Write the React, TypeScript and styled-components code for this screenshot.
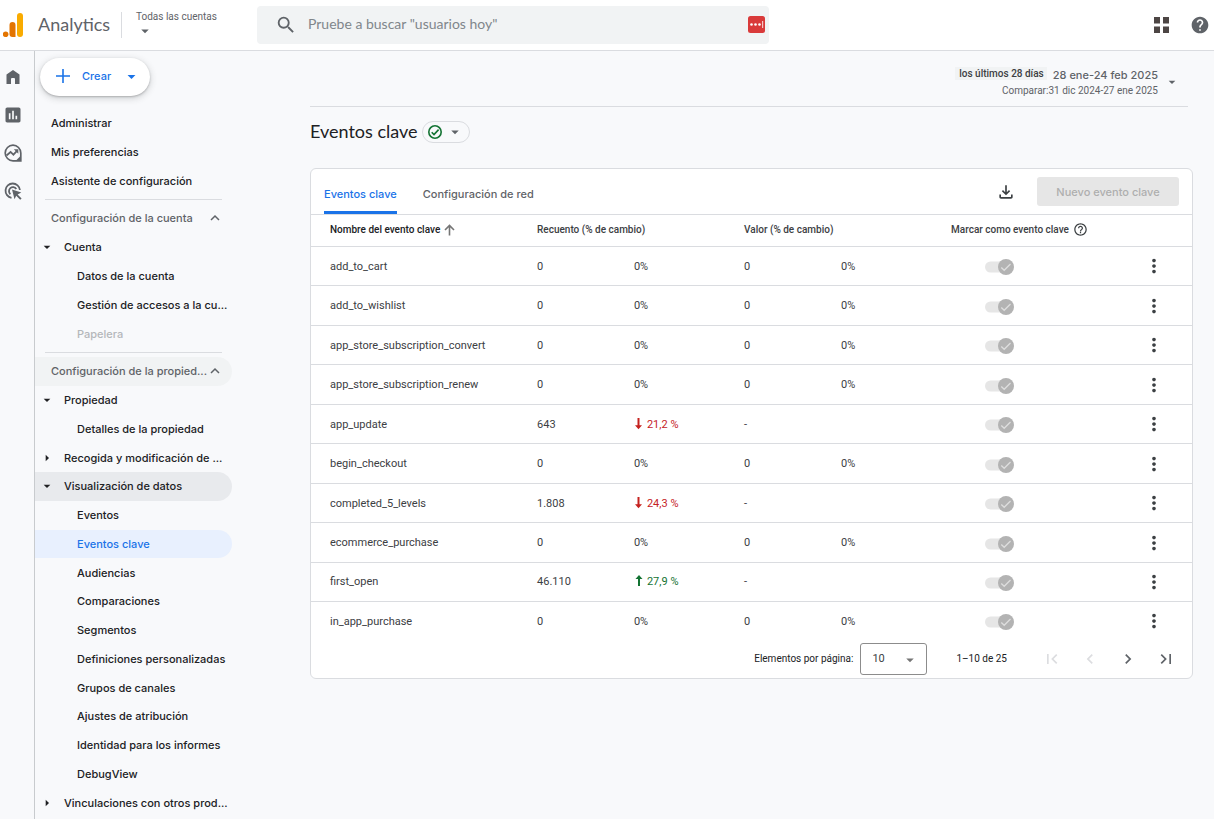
import React from "react";
import styled, { createGlobalStyle, css } from "styled-components";
import {
  MdArrowDropDown,
  MdArrowRight,
  MdChevronLeft,
  MdChevronRight,
  MdFirstPage,
  MdHelp,
  MdHelpOutline,
  MdInsertChart,
  MdLastPage,
  MdMoreVert,
  MdOutlineFileDownload,
  MdSearch,
} from "react-icons/md";

const color = {
  page: "#f8f9fb",
  line: "#dadce0",
  text: "#202124",
  soft: "#3c4043",
  muted: "#5f6368",
  blue: "#1a73e8",
  red: "#c5221f",
  green: "#137333",
};
const brand = `Inter, Roboto, "Liberation Sans", sans-serif`;
const display = `Lato, Roboto, "Liberation Sans", sans-serif`;
const data = `Roboto, "Liberation Sans", sans-serif`;

const GlobalStyle = createGlobalStyle`
  *, *::before, *::after { box-sizing: border-box; }
  body { margin: 0; background: ${color.page}; color: ${color.text}; font: 500 11px/16px ${brand}; }
  button, input, select { font: inherit; color: inherit; margin: 0; padding: 0; border: 0; background: none; }
  button { cursor: pointer; }
  a { color: inherit; text-decoration: none; }
  ul { list-style: none; margin: 0; padding: 0; }
  svg { display: block; flex: none; }
`;

const TopBar = styled.header`
  display: flex;
  align-items: center;
  height: 51px;
  padding: 0 4px 1px 3px;
  background: #fff;
  border-bottom: 1px solid ${color.line};
`;
const Brand = styled.a`
  display: flex;
  align-items: center;
  gap: 14px;
  width: 118px;
  font: 400 18px/24px ${display};
  color: ${color.muted};
  span { padding-bottom: 2px; }
`;
const AccountButton = styled.button`
  display: flex;
  flex-direction: column;
  align-items: flex-start;
  width: 136px;
  height: 26px;
  padding-left: 14px;
  border-left: 1px solid ${color.line};
  font: 400 10px/10px ${data};
  color: ${color.muted};
`;
const SearchBox = styled.label`
  display: flex;
  align-items: center;
  flex: 0 1 512px;
  height: 38px;
  padding: 0 4px 0 18px;
  gap: 11px;
  border-radius: 4px;
  background: #f1f3f4;
  color: ${color.muted};
`;
const SearchInput = styled.input`
  flex: 1;
  min-width: 0;
  padding-bottom: 2px;
  outline: 0;
  font: 400 14px/20px ${display};
  &::placeholder { color: #80868b; opacity: 1; }
`;
const TopActions = styled.div`
  display: flex;
  align-items: center;
  gap: 21px;
  margin-left: auto;
  color: ${color.muted};
`;
const IconButton = styled.button`
  display: grid;
  place-items: center;
`;

const Body = styled.div`
  display: grid;
  grid-template-columns: 35px 197px minmax(0, 1fr);
  min-height: calc(100vh - 51px);
`;
const Rail = styled.nav`
  display: flex;
  flex-direction: column;
  align-items: center;
  gap: 18px;
  padding: 16px 9px 0 0;
  border-right: 1px solid #c8cbce;
  color: ${color.muted};
`;
const RailLink = styled.a`
  display: grid;
  place-items: center;
  width: 20px;
  height: 20px;
`;

const Sidebar = styled.nav``;
const CreateButton = styled.button`
  display: flex;
  align-items: center;
  width: 110px;
  height: 38px;
  margin: 7px 0 13px 5px;
  padding: 0 9px 2px 16px;
  border-radius: 19px;
  background: #fff;
  color: ${color.blue};
  box-shadow: 0 1px 2px rgba(60, 64, 67, 0.3), 0 2px 6px 1px rgba(60, 64, 67, 0.18);
  span { flex: 1; padding-left: 12px; text-align: left; }
`;
const MenuGroup = styled.ul<{ $height: number }>`
  display: grid;
  grid-template-columns: minmax(0, 1fr);
  grid-auto-rows: 1fr;
  height: ${(p) => p.$height}px;
`;
const MenuRule = styled.hr`
  height: 1px;
  margin: 4px 10px;
  border: 0;
  background: ${color.line};
`;
type Tone = "plain" | "section" | "sectionOpen" | "open" | "current" | "off";
const MenuLink = styled.a<{ $level: number; $tone: Tone }>`
  display: flex;
  align-items: center;
  height: 100%;
  gap: 9px;
  padding-left: ${(p) => [16, 4, 42][p.$level]}px;
  padding-right: 12px;
  border-radius: 0 15px 15px 0;
  white-space: nowrap;
  ${(p) =>
    ({
      plain: "",
      section: css`color: ${color.muted};`,
      sectionOpen: css`color: ${color.muted}; background: #f1f3f4;`,
      open: css`background: #e8eaed;`,
      current: css`color: ${color.blue}; background: #e8f0fe;`,
      off: css`color: #b4b7ba;`,
    })[p.$tone]}
`;
const MenuText = styled.span`
  flex: 1;
  min-width: 0;
`;

const Main = styled.main`
  padding: 0 21px 32px 78px;
`;
const DateBar = styled.div`
  display: flex;
  justify-content: flex-end;
  align-items: center;
  height: 56px;
  margin-right: 5px;
  padding: 7px 8px 0 0;
  border-bottom: 1px solid ${color.line};
  color: ${color.muted};
`;
const DateButton = styled.button`
  display: grid;
  grid-template-columns: auto auto;
  align-items: center;
  column-gap: 6px;
  text-align: right;
`;
const DatePreset = styled.span`
  display: flex;
  align-items: center;
  gap: 6px;
`;
const PresetTag = styled.span`
  margin-bottom: 2px;
  padding: 0 3px 0 4px;
  background: #f1f3f4;
  font: 500 10px/13px ${data};
  color: ${color.soft};
`;
const DateCompare = styled.span`
  grid-row: 2;
  font: 400 10px/15px ${data};
`;
const DateCaret = styled.span`
  grid-row: 1 / 3;
  grid-column: 2;
`;
const TitleRow = styled.div`
  display: flex;
  align-items: center;
  gap: 4px;
  height: 22px;
  margin: 14px 0 25px;
`;
const Title = styled.h1`
  margin: 0;
  padding-bottom: 2px;
  font: 400 18px/22px ${display};
`;
const StatusButton = styled.button`
  display: flex;
  align-items: center;
  gap: 4px;
  width: 48px;
  height: 22px;
  padding-left: 5px;
  border: 1px solid ${color.line};
  border-radius: 11px;
  color: ${color.muted};
`;

const Card = styled.section`
  border: 1px solid ${color.line};
  border-radius: 6px;
  background: #fff;
`;
const CardTop = styled.div`
  display: flex;
  align-items: center;
  height: 46px;
  padding: 0 13px;
  border-bottom: 1px solid ${color.line};
`;
const Tabs = styled.div`
  display: flex;
  align-self: stretch;
  gap: 26px;
  margin-right: auto;
`;
const Tab = styled.button<{ $active?: boolean }>`
  padding-top: 8px;
  border-bottom: 3px solid ${(p) => (p.$active ? color.blue : "transparent")};
  color: ${(p) => (p.$active ? color.blue : color.muted)};
`;
const NewEventButton = styled.button`
  width: 142px;
  height: 29px;
  margin-left: 21px;
  border-radius: 3px;
  background: #e6e6e6;
  color: #aeaeae;
  cursor: default;
`;

const Table = styled.table`
  width: 100%;
  height: 425px;
  table-layout: fixed;
  border-spacing: 0;
  font: 400 11px/16px ${data};
  color: ${color.soft};
`;
const Col = styled.col<{ $width?: string }>`
  width: ${(p) => p.$width ?? "auto"};
`;
const HeadCell = styled.th`
  height: 32px;
  padding: 0 0 2px 19px;
  border-bottom: 1px solid ${color.line};
  font: 500 10px/16px ${data};
  text-align: left;
  white-space: nowrap;
  &:first-child { color: ${color.text}; }
`;
const HeadLabel = styled.span`
  display: flex;
  align-items: center;
  gap: 4px;
`;
const BodyRow = styled.tr`
  &:not(:last-child) > td { border-bottom: 1px solid ${color.line}; }
`;
const Cell = styled.td`
  padding: 1px 0 0 19px;
  white-space: nowrap;
`;
const SwitchCell = styled(Cell)`
  padding: 2px 0 0 53px;
`;
const MenuCell = styled(Cell)`
  padding: 0;
  button { margin: 0 auto; }
`;
const Delta = styled.span<{ $up: boolean }>`
  display: flex;
  align-items: center;
  gap: 4px;
  color: ${(p) => (p.$up ? color.green : color.red)};
`;
const Switch = styled.label`
  position: relative;
  display: block;
  width: 29px;
  height: 16px;
`;
const SwitchInput = styled.input`
  position: absolute;
  inset: 0;
  opacity: 0;
`;

const Pager = styled.div`
  display: flex;
  justify-content: flex-end;
  align-items: center;
  height: 38px;
  padding: 0 7px 1px 0;
  font: 400 10px/16px ${data};
`;
const PageSizeLabel = styled.label`
  margin-right: 7px;
`;
const SelectWrap = styled.div`
  display: grid;
  align-items: center;
  > * { grid-area: 1 / 1; }
  svg { justify-self: end; margin: 2px 8px 0 0; color: #757575; pointer-events: none; }
`;
const PageSize = styled.select`
  appearance: none;
  width: 67px;
  height: 32px;
  padding-left: 11px;
  border: 1px solid #8c8c8c;
  border-radius: 3px;
  background: #fff;
  font: 400 11px/16px ${data};
  color: ${color.soft};
`;
const PageRange = styled.span`
  margin: 0 26px 0 29px;
`;
const PageButton = styled(IconButton)`
  width: 38px;
  height: 32px;
  color: ${color.muted};
  &:disabled { color: #dcdde0; cursor: default; }
`;

const AnalyticsLogo = () => (
  <svg width="21" height="26" viewBox="0 0 21 26" aria-hidden="true">
    <rect x="14" y="1" width="6" height="24" rx="3" fill="#f9ab00" />
    <path d="M6.500 13a3 3 0 0 1 6 0v12h-3a3 3 0 0 1-3-3z" fill="#e37400" />
    <circle cx="2.600" cy="22.200" r="2.800" fill="#e37400" />
  </svg>
);
const PasswordBadge = () => (
  <svg width="17" height="17" viewBox="0 0 17 17" aria-hidden="true">
    <rect width="17" height="17" rx="2.500" fill="#d93a3a" />
    <g fill="#fff">
      <circle cx="3.500" cy="8.500" r="1.300" />
      <circle cx="7.500" cy="8.500" r="1.300" />
      <circle cx="11.500" cy="8.500" r="1.300" />
      <rect x="14" y="5" width="1.200" height="7" opacity="0.7" />
    </g>
  </svg>
);
const AppsIcon = () => (
  <svg width="15" height="16" viewBox="0 0 15 16" fill="#4d4544" aria-hidden="true">
    <rect width="6" height="6.500" />
    <rect x="9" width="6" height="6.500" />
    <rect y="9.500" width="6" height="6.500" />
    <rect x="9" y="9.500" width="6" height="6.500" />
  </svg>
);
const HomeIcon = () => (
  <svg width="14" height="15" viewBox="0 0 14 15" fill="currentColor" aria-hidden="true">
    <path d="M7 0 13.500 4.500V14H9V9a1 1 0 0 0-1-1H6a1 1 0 0 0-1 1v5H.5V4.500z" />
  </svg>
);
const ExploreIcon = () => (
  <svg width="18" height="18" viewBox="0 0 18 18" fill="none" stroke="currentColor" strokeWidth="1.700" aria-hidden="true">
    <path d="M9 1.200a7.800 7.800 0 1 0 0 15.600h7.800V9A7.800 7.800 0 0 0 9 1.200z" />
    <path d="M2.500 11.500 6.600 8l2.800 2.700 3.800-4" />
    <path d="M9.800 5.300h4.500v4.500z" fill="currentColor" stroke="none" />
    <path d="M17 11.500V17h-5.500z" fill="currentColor" stroke="none" />
  </svg>
);
const AdsIcon = () => (
  <svg width="18" height="18" viewBox="0 0 18 18" fill="none" stroke="currentColor" strokeWidth="1.800" aria-hidden="true">
    <path d="M7.500 15.800A7.200 7.200 0 1 1 15.900 8" />
    <path d="M6.400 12.200a4 4 0 1 1 5.900-5.300" />
    <path d="M8 7.600 17.300 10.600 13.600 12.400 17.600 16.400 16.200 17.800 12.200 13.800 10.500 17.300z" fill="currentColor" stroke="none" />
  </svg>
);
const PlusIcon = () => (
  <svg width="14" height="14" viewBox="0 0 14 14" fill="none" stroke="currentColor" strokeWidth="1.600" aria-hidden="true">
    <path d="M7 0v14M0 7h14" />
  </svg>
);
const SortArrow = () => (
  <svg width="11" height="12" viewBox="0 0 11 12" fill="none" stroke="#757575" strokeWidth="1.600" aria-hidden="true">
    <path d="M5.500 11.500V1.500M1 6l4.500-4.600L10 6" />
  </svg>
);
const CheckedIcon = () => (
  <svg width="14" height="14" viewBox="0 0 14 14" fill="none" stroke="#137333" strokeWidth="1.600" aria-hidden="true">
    <circle cx="7" cy="7" r="6.200" />
    <path d="m3.700 7.200 2.300 2.300 4.600-4.900" />
  </svg>
);
const ChevronUp = () => (
  <svg width="10" height="8" viewBox="0 0 10 8" fill="none" stroke={color.muted} strokeWidth="1.500" aria-hidden="true">
    <path d="M1 6 5 2l4 4" />
  </svg>
);
const DeltaArrow = ({ up }: { up: boolean }) => (
  <svg width="9" height="14" viewBox="0 0 9 14" fill="currentColor" aria-hidden="true">
    <path d={up ? "M5 0 8.500 4H6v7H4V4H1.500z" : "M3.500 0h2v7.200H8L4.500 11.200 1 7.200h2.500z"} />
  </svg>
);
const SwitchDrawing = () => (
  <svg width="29" height="16" viewBox="0 0 29 16" aria-hidden="true">
    <rect y="2.500" width="26" height="11" rx="5.500" fill="#e6e6e6" />
    <circle cx="21" cy="8" r="8" fill="#b3b3b3" />
    <path d="m16.300 8.500 2.900 2.800 6.300-6.300" fill="none" stroke="#dedede" strokeWidth="1.300" />
  </svg>
);

type Item = { text: string; level?: number; tone?: Tone; caret?: "down" | "right" };
const groups: { height: number; items: Item[] }[] = [
  {
    height: 86,
    items: [{ text: "Administrar" }, { text: "Mis preferencias" }, { text: "Asistente de configuración" }],
  },
  {
    height: 144,
    items: [
      { text: "Configuración de la cuenta", tone: "section" },
      { text: "Cuenta", level: 1, caret: "down" },
      { text: "Datos de la cuenta", level: 2 },
      { text: "Gestión de accesos a la cu...", level: 2 },
      { text: "Papelera", level: 2, tone: "off" },
    ],
  },
  {
    height: 460,
    items: [
      { text: "Configuración de la propied...", tone: "sectionOpen" },
      { text: "Propiedad", level: 1, caret: "down" },
      { text: "Detalles de la propiedad", level: 2 },
      { text: "Recogida y modificación de ...", level: 1, caret: "right" },
      { text: "Visualización de datos", level: 1, caret: "down", tone: "open" },
      { text: "Eventos", level: 2 },
      { text: "Eventos clave", level: 2, tone: "current" },
      { text: "Audiencias", level: 2 },
      { text: "Comparaciones", level: 2 },
      { text: "Segmentos", level: 2 },
      { text: "Definiciones personalizadas", level: 2 },
      { text: "Grupos de canales", level: 2 },
      { text: "Ajustes de atribución", level: 2 },
      { text: "Identidad para los informes", level: 2 },
      { text: "DebugView", level: 2 },
      { text: "Vinculaciones con otros prod...", level: 1, caret: "right" },
    ],
  },
];

type EventRow = { name: string; count: string; change?: string; up?: boolean };
const events: EventRow[] = [
  { name: "add_to_cart", count: "0" },
  { name: "add_to_wishlist", count: "0" },
  { name: "app_store_subscription_convert", count: "0" },
  { name: "app_store_subscription_renew", count: "0" },
  { name: "app_update", count: "643", change: "21,2 %", up: false },
  { name: "begin_checkout", count: "0" },
  { name: "completed_5_levels", count: "1.808", change: "24,3 %", up: false },
  { name: "ecommerce_purchase", count: "0" },
  { name: "first_open", count: "46.110", change: "27,9 %", up: true },
  { name: "in_app_purchase", count: "0" },
];

function SideMenu() {
  return (
    <Sidebar aria-label="Administrar">
      <CreateButton>
        <PlusIcon />
        <span>Crear</span>
        <MdArrowDropDown size={19} />
      </CreateButton>
      {groups.map((group, i) => (
        <React.Fragment key={group.height}>
          {i > 0 && <MenuRule />}
          <MenuGroup $height={group.height}>
            {group.items.map(({ text, level = 0, tone = "plain", caret }) => (
              <li key={text}>
                <MenuLink href="#" $level={level} $tone={tone} aria-current={tone === "current" ? "page" : undefined}>
                  {caret === "down" && <MdArrowDropDown size={16} />}
                  {caret === "right" && <MdArrowRight size={16} />}
                  <MenuText>{text}</MenuText>
                  {(tone === "section" || tone === "sectionOpen") && <ChevronUp />}
                </MenuLink>
              </li>
            ))}
          </MenuGroup>
        </React.Fragment>
      ))}
    </Sidebar>
  );
}

function EventTable() {
  return (
    <Table>
      <colgroup>
        <Col $width="23.5%" />
        <Col $width="11%" />
        <Col $width="12.5%" />
        <Col $width="11%" />
        <Col $width="12.5%" />
        <Col />
        <Col $width="76px" />
      </colgroup>
      <thead>
        <tr>
          <HeadCell scope="col">
            <HeadLabel>
              Nombre del evento clave
              <SortArrow />
            </HeadLabel>
          </HeadCell>
          <HeadCell scope="col" colSpan={2}>Recuento (% de cambio)</HeadCell>
          <HeadCell scope="col" colSpan={2}>Valor (% de cambio)</HeadCell>
          <HeadCell scope="col">
            <HeadLabel>
              Marcar como evento clave
              <MdHelpOutline size={15} />
            </HeadLabel>
          </HeadCell>
          <HeadCell as="td" />
        </tr>
      </thead>
      <tbody>
        {events.map((e) => (
          <BodyRow key={e.name}>
            <Cell>{e.name}</Cell>
            <Cell>{e.count}</Cell>
            <Cell>
              {e.change ? (
                <Delta $up={!!e.up}>
                  <DeltaArrow up={!!e.up} />
                  {e.change}
                </Delta>
              ) : (
                "0%"
              )}
            </Cell>
            <Cell>{e.change ? "-" : "0"}</Cell>
            <Cell>{e.change ? "" : "0%"}</Cell>
            <SwitchCell>
              <Switch>
                <SwitchInput type="checkbox" role="switch" defaultChecked disabled aria-label={e.name} />
                <SwitchDrawing />
              </Switch>
            </SwitchCell>
            <MenuCell>
              <IconButton aria-label="Más">
                <MdMoreVert size={22} />
              </IconButton>
            </MenuCell>
          </BodyRow>
        ))}
      </tbody>
    </Table>
  );
}

export default function App() {
  return (
    <>
      <GlobalStyle />
      <TopBar>
        <Brand href="#">
          <AnalyticsLogo />
          <span>Analytics</span>
        </Brand>
        <AccountButton>
          Todas las cuentas
          <MdArrowDropDown size={18} />
        </AccountButton>
        <SearchBox>
          <MdSearch size={22} />
          <SearchInput type="search" placeholder={'Pruebe a buscar "usuarios hoy"'} />
          <PasswordBadge />
        </SearchBox>
        <TopActions>
          <IconButton aria-label="Aplicaciones">
            <AppsIcon />
          </IconButton>
          <IconButton aria-label="Ayuda">
            <MdHelp size={20} />
          </IconButton>
        </TopActions>
      </TopBar>
      <Body>
        <Rail aria-label="Secciones">
          <RailLink href="#" aria-label="Inicio"><HomeIcon /></RailLink>
          <RailLink href="#" aria-label="Informes"><MdInsertChart size={20} /></RailLink>
          <RailLink href="#" aria-label="Explorar"><ExploreIcon /></RailLink>
          <RailLink href="#" aria-label="Publicidad"><AdsIcon /></RailLink>
        </Rail>
        <SideMenu />
        <Main>
          <DateBar>
            <DateButton>
              <DatePreset>
                <PresetTag>los últimos 28 días</PresetTag>
                28 ene-24 feb 2025
              </DatePreset>
              <DateCompare>Comparar:31 dic 2024-27 ene 2025</DateCompare>
              <DateCaret>
                <MdArrowDropDown size={16} />
              </DateCaret>
            </DateButton>
          </DateBar>
          <TitleRow>
            <Title>Eventos clave</Title>
            <StatusButton aria-label="Estado">
              <CheckedIcon />
              <MdArrowDropDown size={18} />
            </StatusButton>
          </TitleRow>
          <Card>
            <CardTop>
              <Tabs role="tablist">
                <Tab role="tab" aria-selected $active>Eventos clave</Tab>
                <Tab role="tab" aria-selected={false}>Configuración de red</Tab>
              </Tabs>
              <IconButton aria-label="Descargar">
                <MdOutlineFileDownload size={20} color={color.soft} />
              </IconButton>
              <NewEventButton disabled>Nuevo evento clave</NewEventButton>
            </CardTop>
            <EventTable />
            <Pager>
              <PageSizeLabel htmlFor="page-size">Elementos por página:</PageSizeLabel>
              <SelectWrap>
                <PageSize id="page-size" defaultValue="10">
                  <option>10</option>
                  <option>25</option>
                </PageSize>
                <MdArrowDropDown size={18} />
              </SelectWrap>
              <PageRange>1–10 de 25</PageRange>
              <PageButton disabled aria-label="Primera página"><MdFirstPage size={20} /></PageButton>
              <PageButton disabled aria-label="Página anterior"><MdChevronLeft size={20} /></PageButton>
              <PageButton aria-label="Página siguiente"><MdChevronRight size={20} /></PageButton>
              <PageButton aria-label="Última página"><MdLastPage size={20} /></PageButton>
            </Pager>
          </Card>
        </Main>
      </Body>
    </>
  );
}
